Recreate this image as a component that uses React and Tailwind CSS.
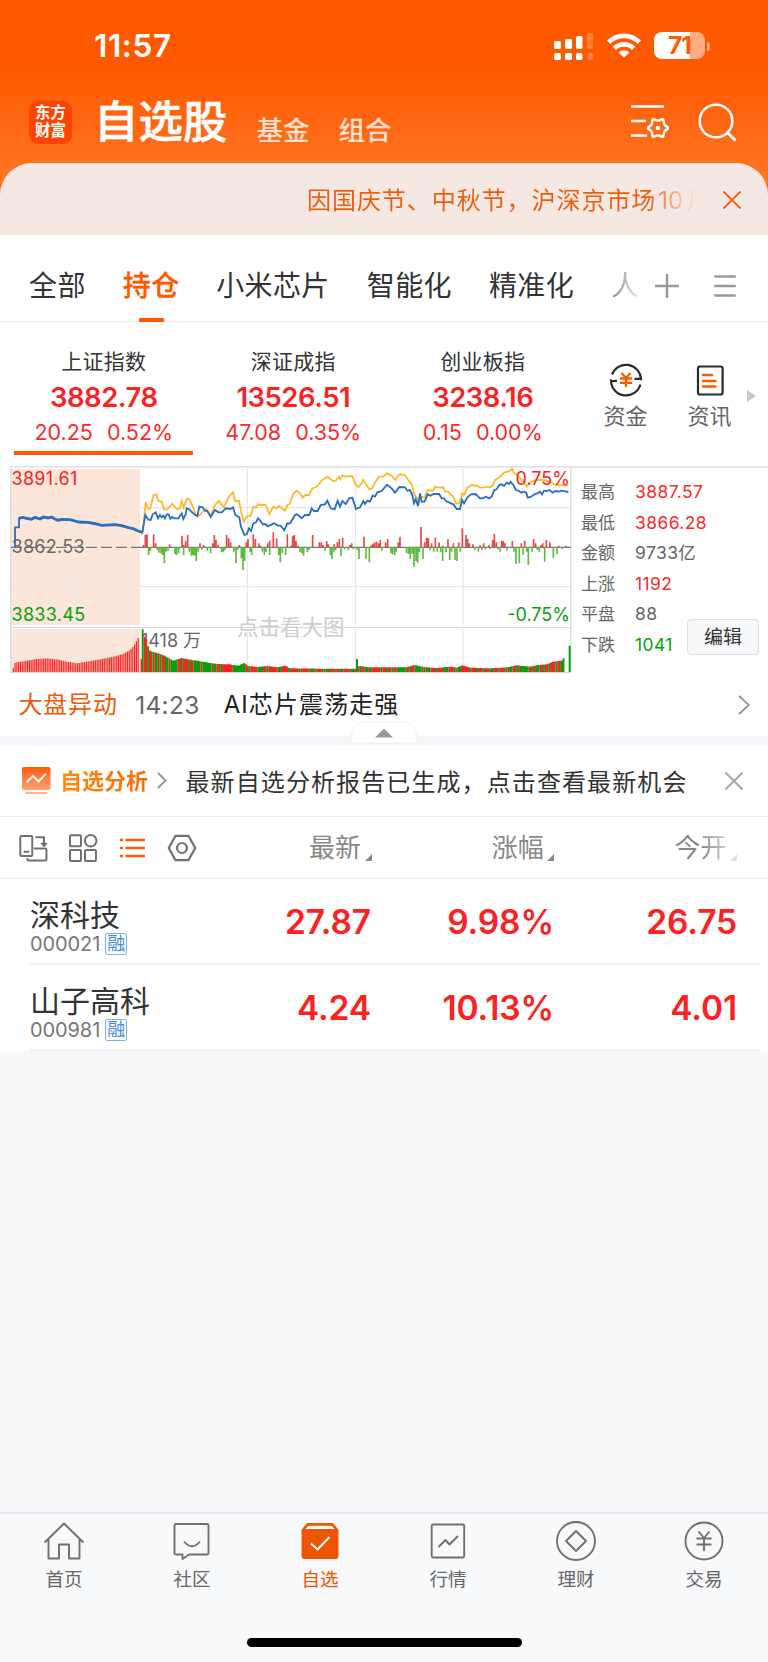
import React from 'react';

const INDEXES = [
  { name: '上证指数', value: '3882.78', change: '20.25', pct: '0.52%', active: true },
  { name: '深证成指', value: '13526.51', change: '47.08', pct: '0.35%' },
  { name: '创业板指', value: '3238.16', change: '0.15', pct: '0.00%' },
];

const STATS = [
  { label: '最高', value: '3887.57', color: 'text-[#f92b2b]' },
  { label: '最低', value: '3866.28', color: 'text-[#f92b2b]' },
  { label: '金额', value: '9733亿', color: 'text-[#666]' },
  { label: '上涨', value: '1192', color: 'text-[#f92b2b]' },
  { label: '平盘', value: '88', color: 'text-[#666]' },
  { label: '下跌', value: '1041', color: 'text-[#0a9f0a]' },
];

const STOCKS = [
  { name: '深科技', code: '000021', price: '27.87', pct: '9.98%', open: '26.75' },
  { name: '山子高科', code: '000981', price: '4.24', pct: '10.13%', open: '4.01' },
];

// Chart data. Each half of the session has its own x origin, 3 units per pixel.
const PRICE_AM = '45,277 45,217 57,217 57,190 67,187 80,190 95,193 105,187 120,192 130,186 145,189 155,186 165,192 175,196 185,193 210,194 235,201 265,202 290,207 305,211 345,209 365,212 385,218 400,221 415,228 427,232 436,180 441,188 445,194 452,195 458,178 467,172 474,190 480,180 485,187 490,182 495,190 500,178 506,178 511,191 517,186 522,190 535,190 545,175 550,192 557,178 560,160 567,163 583,178 592,184 598,155 608,157 615,167 622,168 632,186 645,165 655,172 665,172 678,160 692,162 699,157 706,180 713,184 718,187 723,215 733,240 740,238 747,220 753,228 760,205 768,202 774,190 782,198 788,208 797,207 803,214 815,208 823,205 833,212 842,212 853,226 862,205 870,206';
const PRICE_PM = '0,206 8,192 15,180 22,178 35,190 45,180 58,180 65,160 72,168 83,168 92,150 105,148 112,137 122,160 134,163 143,137 150,155 157,138 167,147 178,130 187,128 198,162 210,157 220,138 225,147 232,137 240,140 248,122 255,125 262,112 275,108 291,89 305,100 315,113 328,96 345,97 352,107 360,105 367,120 372,145 377,132 384,153 390,115 395,140 404,140 413,118 422,122 430,117 447,117 455,130 462,130 468,138 478,143 490,148 500,162 510,162 516,135 522,145 532,127 543,118 557,117 570,130 577,130 588,125 597,130 605,125 613,105 620,103 628,90 635,88 642,93 650,83 657,87 662,80 670,90 678,105 687,108 695,113 703,110 709,113 713,128 722,126 735,117 742,115 750,110 756,118 762,107 770,108 778,105 788,113 797,108 808,110 815,107 835,111';
const AVG_AM = '427,240 437,145 446,162 451,160 458,130 461,120 469,118 475,138 485,140 492,163 502,163 517,146 531,163 540,160 545,138 551,158 561,131 568,133 577,152 588,180 597,182 606,172 620,163 632,182 645,150 657,138 664,148 672,157 688,123 699,112 705,138 717,138 724,172 731,200 742,183 752,182 760,155 768,157 774,148 783,150 797,150 808,177 820,155 828,160 837,153 855,167 862,150 870,147';
const AVG_PM = '0,147 10,115 20,107 30,115 38,128 46,120 57,120 66,102 82,93 97,75 113,65 122,73 130,78 137,77 147,65 151,72 157,61 165,65 187,63 195,85 205,97 215,85 220,74 228,88 238,103 247,100 255,82 267,65 280,65 291,55 305,62 316,75 328,58 345,60 358,80 366,90 372,115 387,140 395,125 403,128 413,105 430,107 435,95 447,98 460,97 465,110 475,110 483,120 490,125 498,146 508,143 517,115 522,120 532,98 545,90 560,92 572,98 583,97 590,95 600,97 608,93 615,75 630,65 643,52 655,50 667,41 672,55 680,58 690,70 700,78 710,95 720,82 740,75 760,75 780,80 790,87 800,90 835,91';

const UP_AM = [[430,270],[436,240],[441,238],[461,238],[467,265],[509,268],[546,243],[551,270],[557,258],[563,240],[600,265],[611,270],[638,265],[643,240],[648,255],[654,270],[680,240],[686,250],[692,262],[718,270],[739,262],[744,252],[760,238],[766,252],[777,265],[782,272],[803,265],[809,257],[820,232],[830,250],[862,238]];
const DOWN_AM = [[446,300],[451,288],[456,280],[472,285],[477,293],[483,295],[488,300],[493,325],[498,290],[504,288],[525,298],[530,300],[536,295],[541,280],[551,300],[568,290],[574,302],[579,300],[584,302],[589,318],[595,290],[606,285],[622,288],[632,295],[665,292],[670,290],[675,285],[702,290],[708,325],[713,285],[724,310],[729,345],[734,318],[750,290],[755,300],[787,290],[793,300],[798,290],[809,300],[836,300],[841,322],[847,295],[857,300],[868,280]];
const UP_PM = [[3,272],[8,243],[13,240],[18,258],[24,272],[68,240],[88,262],[94,262],[99,270],[110,258],[115,268],[132,268],[142,262],[148,252],[158,248],[180,270],[185,265],[222,245],[244,270],[249,266],[254,262],[260,260],[266,265],[271,255],[287,262],[293,252],[325,262],[330,245],[393,216],[404,262],[410,248],[415,250],[425,265],[436,248],[447,262],[458,272],[474,253],[490,265],[506,262],[517,220],[528,240],[533,252],[538,265],[549,268],[570,270],[581,265],[597,270],[608,255],[613,237],[619,262],[635,257],[640,258],[645,265],[667,258],[694,265],[704,257],[731,252],[737,265],[753,270],[758,265],[769,255],[780,262],[806,272],[828,272]];
const DOWN_PM = [[30,292],[36,295],[41,302],[52,292],[57,285],[105,287],[121,300],[126,312],[132,290],[137,285],[153,303],[164,283],[174,285],[190,283],[201,285],[207,312],[228,312],[238,322],[276,288],[303,295],[308,298],[314,300],[319,290],[350,295],[356,296],[361,312],[367,296],[372,335],[378,318],[383,323],[388,292],[399,312],[420,285],[431,290],[442,290],[452,292],[458,318],[468,292],[479,315],[485,290],[495,315],[501,318],[511,290],[554,285],[565,290],[576,285],[586,283],[600,283],[624,283],[630,290],[651,287],[672,290],[678,327],[688,325],[699,300],[710,290],[715,330],[726,290],[742,285],[748,290],[764,320],[790,308],[801,298],[817,282]];

const AUCTION_VOL = [[40,638],[46,622],[52,622],[80,617],[110,612],[145,610],[175,614],[200,620],[230,625],[260,620],[300,613],[340,605],[370,597],[390,585],[402,572],[415,548]];
const VOL = [[428,523],[434,548],[439,552],[445,578],[450,588],[465,592],[480,597],[490,600],[520,617],[545,609],[575,615],[590,617],[620,622],[650,627],[690,628],[715,632],[733,624],[745,633],[770,636],[805,633],[830,637],[857,632],[870,640],[960,641],[1072,641],[1076,632],[1110,637],[1220,637],[1245,630],[1270,636],[1310,639],[1350,635],[1370,638],[1387,631],[1410,638],[1470,640],[1520,637],[1550,631],[1590,635],[1615,630],[1640,628],[1660,620],[1685,617],[1693,607]];
const VOL_COLORS = 'grrgrrgrgrgrrggrggggrrgrrrgrrggggrgggggrggrrgrrrrrrgggggggrrgrrrrgggrrgrrrrrggrrrrgrrrrrgrrrrrggrgrrrgrggrrrgrrggrrrrggrrrgrrggrgrrrrrgrrgrrgrrgggggrrgrrggggrgrggrrrgrrrgggrrrgrggrrrrrgrrrgrrgrrrggrrrgrrrgrggrrgrgggggrrgrggrrgrrgrrrgrrgggrggg';

function levelAt(points, x) {
  for (let i = 1; i < points.length; i++) {
    const [x0, y0] = points[i - 1];
    const [x1, y1] = points[i];
    if (x <= x1) return y0 + ((y1 - y0) * (x - x0)) / (x1 - x0);
  }
  return points[points.length - 1][1];
}

const bars = (list, base) => list.map(([x, y]) => `M${x} ${base}V${y.toFixed(1)}`).join('');

const range = (from, to, step) => {
  const out = [];
  for (let x = from; x <= to; x += step) out.push(x);
  return out;
};

const auctionBars = range(40, 417, 5.35).map((x) => [x, levelAt(AUCTION_VOL, x)]);
const volBars = range(428, 1694, 5.35).map((x) => [x, levelAt(VOL, x)]);
const redVol = volBars.filter((_, i) => VOL_COLORS[i % VOL_COLORS.length] === 'r');
const greenVol = volBars.filter((_, i) => VOL_COLORS[i % VOL_COLORS.length] === 'g');

export default function App() {
  return (
    <div lang="zh-CN" className="flex h-[1662px] w-[768px] flex-col overflow-hidden bg-[#f7f8fa] font-['Inter','Noto_Sans_CJK_SC',sans-serif] text-[#333]">
      <Header />
      <Tabs />
      <IndexBar />
      <MarketPanel />
      <Ticker />
      <AnalysisBanner />
      <TableHead />
      {STOCKS.map((s) => <StockRow key={s.code} stock={s} />)}
      <BottomNav />
    </div>
  );
}

function Header() {
  return (
    <div className="h-[235px] shrink-0 bg-linear-to-b from-[#ff5900] from-30% to-[#ff741f] to-75%">
      {/* Status bar */}
      <div className="flex h-[92px] items-center pl-[94px] pr-[58px] text-white">
        <span className="text-[31.5px] font-semibold leading-none tracking-[0.6px]">11:57</span>
        <svg className="ml-auto -mt-[1px]" width="40" height="28" viewBox="0 0 40 28" fill="#fff">
          <rect x="0" y="9" width="7" height="8" rx="1.6" />
          <rect x="11" y="7" width="7" height="10" rx="1.6" />
          <rect x="22" y="4" width="6.5" height="13" rx="1.6" />
          <rect x="33" y="1" width="6" height="16" rx="1.6" opacity=".22" />
          <rect x="0" y="21" width="7" height="7" rx="1.8" />
          <rect x="11" y="21" width="7" height="7" rx="1.8" />
          <rect x="22" y="21" width="6.5" height="7" rx="1.8" />
          <rect x="33" y="21" width="6" height="7" rx="1.8" opacity=".22" />
        </svg>
        <svg className="ml-[12px] -mt-[1px]" width="36" height="27" viewBox="0 0 36 27" fill="none" stroke="#fff" strokeWidth="4.6">
          <path d="M2.6 10.2a22 22 0 0 1 30.8 0" />
          <path d="M8.4 16.3a13.8 13.8 0 0 1 19.2 0" />
          <path d="M18 25.5l-5.4-5.1a7.8 7.8 0 0 1 10.8 0z" fill="#fff" stroke="none" />
        </svg>
        <div className="ml-[12px] -mt-[1px] flex h-[27px] w-[51px] items-center justify-center rounded-[8px] bg-linear-to-r from-white from-71% to-[#ffac82] to-71% text-[24.5px] font-bold leading-none tracking-[-1px] text-[#ff5900]">
          71
        </div>
        <div className="ml-[2px] h-[9px] w-[3px] rounded-r-full bg-[#ffac82]" />
      </div>

      {/* Title row */}
      <div className="flex h-[71px] items-center pl-[29px] pr-[31px]">
        <div className="mt-[-11px] flex h-[43px] w-[43px] flex-col items-center justify-center rounded-[9px] bg-[#ff4300] text-[15.5px] font-bold leading-[18px] text-white">
          <span>东方</span>
          <span>财富</span>
        </div>
        <span className="ml-[22px] mt-[-10px] text-[44.5px] font-medium leading-none text-white [-webkit-text-stroke:0.6px_white]">自选股</span>
        <span className="ml-[29px] mt-[5px] text-[26.5px] font-medium leading-none text-white/80">基金</span>
        <span className="ml-[29px] mt-[5px] text-[26.5px] font-medium leading-none text-white/80">组合</span>
        <svg className="ml-auto mt-[-11px]" width="40" height="36" viewBox="0 0 40 36" fill="none" stroke="#fff" strokeWidth="2.4">
          <path d="M1 2.5h33M1 17h15M1 31.5h16" />
          <path d="M36.560 25.630Q33.630 27.250 33.690 30.600Q33.750 33.960 30.880 32.230Q28 30.500 25.120 32.230Q22.250 33.960 22.310 30.600Q22.370 27.250 19.440 25.630Q16.500 24 19.440 22.370Q22.370 20.750 22.310 17.400Q22.250 14.040 25.120 15.770Q28 17.500 30.880 15.770Q33.750 14.040 33.690 17.400Q33.630 20.750 36.560 22.370Q39.500 24 36.560 25.630z" />
          <circle cx="28" cy="24" r="2.3" fill="#fff" stroke="none" />
        </svg>
        <svg className="ml-[28px] mt-[-11px]" width="39" height="39" viewBox="0 0 39 39" fill="none" stroke="#fff" strokeWidth="2.5">
          <circle cx="18" cy="18" r="16.3" />
          <path d="M29.3 29.5l8.2 8" strokeWidth="3" />
        </svg>
      </div>

      {/* Notice */}
      <div className="flex h-[72px] items-center rounded-t-[32px] bg-[#f5e8e2] pl-[307px] pr-[27px] pt-[1px]">
        <span className="w-[406px] whitespace-nowrap bg-linear-to-r from-[#ed5b0c] from-84% to-[#f5e8e2] to-96% bg-clip-text font-['Noto_Sans_CJK_SC',sans-serif] text-[24px] leading-[34px] tracking-[0.95px] text-transparent">
          因国庆节、中秋节，沪深京市场<span className="ml-[2px] mr-[3px] font-['Inter',sans-serif] tracking-normal">10</span>月
        </span>
        <svg className="ml-auto" width="18" height="18" viewBox="0 0 18 18" stroke="#ed5b0c" strokeWidth="1.9">
          <path d="M.5.5l17 17M17.5.5l-17 17" />
        </svg>
      </div>
    </div>
  );
}

function Tabs() {
  return (
    <div className="flex h-[87px] shrink-0 items-center border-b border-[#ebebeb] bg-white pl-[29px] pr-[32px] pb-[1px] pt-[16px] text-[28px] leading-[70px] tracking-[0.4px]">
      <span>全部</span>
      <span className="relative ml-[37px] font-medium text-[#ff5900] [-webkit-text-stroke:0.3px_#ff5900]">
        持仓
        <i className="absolute bottom-[-1px] left-[16px] h-[4px] w-[25px] rounded-[1px] bg-[#ff5900]" />
      </span>
      <span className="ml-[36.500px]">小米芯片</span>
      <span className="ml-[37px]">智能化</span>
      <span className="ml-[37px]">精准化</span>
      <span className="ml-[37px] bg-linear-to-r from-[#888] to-[#eee] bg-clip-text text-transparent">人</span>
      <svg className="ml-auto" width="24" height="24" viewBox="0 0 24 24" stroke="#999" strokeWidth="2.4">
        <path d="M12 0v24M0 12h24" />
      </svg>
      <svg className="ml-[35px]" width="22" height="24" viewBox="0 0 22 24" stroke="#999" strokeWidth="2.4" strokeLinecap="round">
        <path d="M1.2 2.5h19.6M1.2 12h19.6M1.2 21.5h19.6" />
      </svg>
    </div>
  );
}

function IndexBar() {
  return (
    <div className="flex h-[144px] shrink-0 bg-white pl-[9px]">
      {INDEXES.map((it) => (
        <div key={it.name} className="flex w-[189.5px] flex-col items-center pt-[26px]">
          <span className="text-[21px] leading-[28px] tracking-[0.2px]">{it.name}</span>
          <span className="mt-[4px] text-[27.5px] font-semibold leading-[34px] tracking-[-0.5px] text-[#f92323]">{it.value}</span>
          <span className="mt-[4px] flex gap-[14px] text-[21.5px] leading-[28px] text-[#f92b2b]">
            <span>{it.change}</span>
            <span>{it.pct}</span>
          </span>
          {it.active && <div className="mt-[5px] h-[4px] w-[179px] bg-[#ff5900]" />}
        </div>
      ))}
      <div className="ml-[8px] flex w-[80px] flex-col items-center pt-[41px] text-[22px] leading-[30px] text-[#666]">
        <svg width="34" height="34" viewBox="0 0 34 34" fill="none" stroke="#2b2b2b" strokeWidth="2.2">
          <path d="M3 11.5A15 15 0 0 1 32 15.8h-6.5M31.4 21.5A15 15 0 0 1 2 18.2l6-.4M32 15.8l-.3 1.5M2 18.2l-.2-1.8" />
          <path d="M12.5 10l4.5 5 4.5-5M10.8 15.5h12.4M10.8 19.8h12.4M17 15v9" stroke="#ff5900" strokeWidth="2.3" />
        </svg>
        <span className="mt-[4px]">资金</span>
      </div>
      <div className="ml-[4px] flex w-[80px] flex-col items-center pt-[41px] text-[22px] leading-[30px] text-[#666]">
        <svg width="34" height="34" viewBox="0 0 34 34" fill="none" stroke="#2b2b2b" strokeWidth="2.2">
          <rect x="5" y="3.5" width="24.6" height="28" rx="2" />
          <path d="M10 12h9M10 18h12.5M10 23.5h12.5" stroke="#ff5900" strokeWidth="2.4" strokeLinecap="round" />
        </svg>
        <span className="mt-[4px]">资讯</span>
      </div>
      <div className="mt-[68px] h-0 w-0 -ml-[3px] border-y-[6px] border-l-[9px] border-y-transparent border-l-[#c8c8c8]" />
    </div>
  );
}

function MarketPanel() {
  return (
    <div className="flex h-[208px] shrink-0 bg-white pl-[10px]">
      <MinuteChart />
      <div className="flex grow items-end border-t-2 border-[#e3e4ea] pb-[14px] pl-[9px]">
        <div className="w-[106px] shrink-0 text-[17px] leading-[30.5px]">
          {STATS.map((s) => (
            <div key={s.label} className="flex">
              <span className="w-[54px] shrink-0 text-[#666]">{s.label}</span>
              <span className={`whitespace-nowrap text-[17.5px] tracking-[0.4px] ${s.color}`}>{s.value}</span>
            </div>
          ))}
        </div>
        <button className="mb-[5px] h-[36px] w-[72px] shrink-0 rounded-[4px] border border-[#dcdfe6] bg-[#f7f8fa] text-[19px] leading-none text-[#333]">
          编辑
        </button>
      </div>
    </div>
  );
}

function MinuteChart() {
  return (
    <svg className="shrink-0" width="562" height="208" viewBox="0 0 562 208" fill="none">
      <rect x="1" y="3" width="129" height="156" fill="#fce6da" />
      <rect x="1" y="163" width="129" height="43" fill="#fce6da" />
      <path d="M1 41.7h560M1 120.7h560M65.5 3v156M65.5 163v43M237.5 3v156M237.5 163v43M345.5 3v156M345.5 163v43M453 3v156M453 163v43" stroke="#e6e7f0" strokeWidth="1.2" />
      <path d="M.7 207V.8H562M.7 161.5H561M.7 206.6H561M560.8 1v206" stroke="#d8dae2" strokeWidth="1.2" />
      <path d="M1 81.3h130" stroke="#777" strokeWidth="1.2" strokeDasharray="11 4" />
      <path d="M131 81.3h430" stroke="#777" strokeWidth="1.2" />
      <text x="227" y="169" fontSize="21.5" fill="#ccc">点击看大图</text>
      <text x="131" y="180.500" fontSize="18" fill="#666">1418 万</text>

      <g transform="translate(-10 -11) scale(.33333)">
        <path d={bars(UP_AM, 277)} stroke="#e8484a" strokeWidth="5" />
        <path d={bars(DOWN_AM, 277)} stroke="#5dbb3f" strokeWidth="5" />
        <path d={bars(auctionBars, 651)} stroke="#f92323" strokeWidth="3.6" />
        <path d="M424 651V612" stroke="#f92323" strokeWidth="5" />
        <path d={bars(redVol, 651)} stroke="#f92323" strokeWidth="5.6" />
        <path d={bars(greenVol, 651)} stroke="#0a9f0a" strokeWidth="5.6" />
        <path d="M1071 651V612M1709 651V572" stroke="#0a9f0a" strokeWidth="6" />
        <polyline points={AVG_AM} stroke="#fdbb30" strokeWidth="5.5" />
        <polyline points={PRICE_AM} stroke="#2b6fc2" strokeWidth="5.5" />
        <polyline points={PRICE_AM.split(' ').slice(3, 26).join(' ')} stroke="#2b6fc2" strokeWidth="8.5" strokeLinejoin="round" />
      </g>
      <g transform="translate(280 -11) scale(.33333)">
        <path d={bars(UP_PM, 277)} stroke="#e8484a" strokeWidth="5" />
        <path d={bars(DOWN_PM, 277)} stroke="#5dbb3f" strokeWidth="5" />
        <polyline points={AVG_PM} stroke="#fdbb30" strokeWidth="5.5" />
        <polyline points={PRICE_PM} stroke="#2b6fc2" strokeWidth="5.5" />
      </g>

      <g fontSize="18" letterSpacing=".3">
        <text x="1.5" y="18.5" fill="#f92323">3891.61</text>
        <text x="1.5" y="87" fill="#666">3862.53</text>
        <text x="1.5" y="154.5" fill="#0a9f0a">3833.45</text>
      </g>
      <g fontSize="18" textAnchor="end">
        <text x="560" y="18.5" fill="#f92323">0.75%</text>
        <text x="560" y="154.5" fill="#0a9f0a">-0.75%</text>
      </g>
    </svg>
  );
}

function Ticker() {
  return (
    <div className="relative flex h-[71px] shrink-0 items-center border-b-[9px] border-[#f5f6fa] bg-white pl-[18.500px] pr-[18px] text-[24px] leading-none">
      <span className="text-[#ed5b0c] tracking-[0.8px]">大盘异动</span>
      <span className="ml-[17.500px] text-[24.500px] tracking-[0.3px] text-[#666]">14:23</span>
      <span className="ml-[24px] text-[#222] tracking-[1.100px]">AI芯片震荡走强</span>
      <svg className="ml-auto" width="12" height="20" viewBox="0 0 12 20" fill="none" stroke="#888" strokeWidth="1.7">
        <path d="M1 .8L10.8 10 1 19.2" />
      </svg>
      {/* Collapse handle */}
      <svg className="absolute left-[349px] top-[47px]" width="70" height="24" viewBox="0 0 70 24">
        <path d="M1 22Q4 1 13 1h44q9 0 12 21z" fill="#fff" stroke="#ededf1" />
        <path d="M26 16.5l9-9 9 9z" fill="#999" />
      </svg>
    </div>
  );
}

function AnalysisBanner() {
  return (
    <div className="flex h-[72px] shrink-0 items-center border-b border-[#ebebeb] bg-white pl-[21px] pr-[25px] text-[24px] leading-none">
      <svg width="31" height="28" viewBox="0 0 31 28" fill="none">
        <defs>
          <linearGradient id="screen" x1="0" y1="0" x2="0" y2="1">
            <stop offset="0" stopColor="#ff5a0a" />
            <stop offset="1" stopColor="#ffa273" />
          </linearGradient>
        </defs>
        <rect x="1" y="0" width="28.5" height="23" rx="2" fill="url(#screen)" />
        <path d="M5.5 15.5l6.5-6.5 5.5 5.5 7.5-8" stroke="#fff" strokeWidth="2" />
        <path d="M4.5 26h21.5" stroke="#ffb48e" strokeWidth="2" />
      </svg>
      <span className="ml-[8px] bg-linear-to-r from-[#ff8a0c] to-[#ff6a00] bg-clip-text text-[22px] font-bold leading-[32px] text-transparent">自选分析</span>
      <svg className="ml-[9px]" width="10" height="17" viewBox="0 0 10 17" fill="none" stroke="#999" strokeWidth="2">
        <path d="M1 1l7.5 7.5L1 16" />
      </svg>
      <span className="ml-[18.500px] whitespace-nowrap font-['Noto_Sans_CJK_SC',sans-serif] tracking-[1.100px]">最新自选分析报告已生成，点击查看最新机会</span>
      <svg className="ml-auto" width="18" height="18" viewBox="0 0 18 18" stroke="#aaa" strokeWidth="2.2">
        <path d="M.5.5l17 17M17.5.5l-17 17" />
      </svg>
    </div>
  );
}

function TableHead() {
  return (
    <div className="flex h-[62px] shrink-0 items-center border-b border-[#ebebeb] bg-white pl-[19px] pr-[31px] text-[26px] leading-none text-[#888]">
      <svg width="29" height="28" viewBox="0 0 29 28" fill="none" stroke="#707070" strokeWidth="2">
        <rect x="1.3" y="2" width="12" height="20" rx="1" />
        <path d="M4.8 17.8h5.5M16.5 3.2H25v8M22.3 9l2.7 2.8L27.7 9" />
        <path d="M15 14.5h11.5q1 0 1 1v10q0 1-1 1H9.5q-1 0-1-1V24" />
      </svg>
      <svg className="ml-[20px]" width="30" height="28" viewBox="0 0 30 28" fill="none" stroke="#707070" strokeWidth="2">
        <rect x="2" y="1.3" width="11" height="11" rx="1" />
        <circle cx="22.7" cy="6.8" r="5.8" />
        <rect x="2" y="16" width="11" height="11" rx="1" />
        <rect x="17" y="16" width="11" height="11" rx="1" />
      </svg>
      <svg className="ml-[21px]" width="27" height="20" viewBox="0 0 27 20" stroke="#ff5900" strokeWidth="2.4">
        <path d="M6.5 2H26M6.5 10H26M6.5 18H26M1 2h3M1 10h3M1 18h3" />
      </svg>
      <svg className="ml-[21px]" width="30" height="28" viewBox="0 0 30 28" fill="none" stroke="#707070" strokeWidth="2.2" strokeLinejoin="round">
        <path d="M8.5 1.8h13L28.3 14l-6.8 12.2h-13L1.7 14z" />
        <circle cx="15" cy="14" r="5" />
      </svg>
      <div className="flex w-[175px] items-end justify-end">
        最新<SortMark />
      </div>
      <div className="flex w-[183px] items-end justify-end">
        涨幅<SortMark />
      </div>
      <div className="flex w-[183px] items-end justify-end">
        <span className="bg-linear-to-r from-[#888] from-50% to-[#ccc] bg-clip-text text-transparent">今开</span>
        <SortMark faded />
      </div>
    </div>
  );
}

function SortMark({ faded }) {
  return (
    <svg className="ml-[3.500px]" width="7" height="7" viewBox="0 0 7 7">
      <path d="M7 0v7H0z" fill={faded ? '#e0e0e4' : '#888'} />
    </svg>
  );
}

function StockRow({ stock }) {
  return (
    <div className="h-[86px] shrink-0 bg-white pl-[30px] pr-[9px]">
      <div className="flex h-[86px] items-center border-b-2 border-[#f1f2f4] pt-[2px] pr-[22px] text-[33.500px] font-semibold tracking-[-0.1px] text-[#f92323]">
        <div className="w-[160px] pt-[8px] font-normal text-[#333]">
          <div className="text-[30px] leading-[36px] tracking-normal">{stock.name}</div>
          <div className="flex items-center text-[20px] leading-[22px] text-[#777]">
            <span className="tracking-[-0.1px]">{stock.code}</span>
            <span className="ml-[5px] flex h-[22px] w-[22px] items-center justify-center rounded-[2px] border border-[#7fb0ea] text-[18px] leading-none tracking-normal text-[#3f8be0]">融</span>
          </div>
        </div>
        <span className="w-[181px] text-right">{stock.price}</span>
        <span className="w-[183px] text-right">{stock.pct}</span>
        <span className="w-[183px] text-right">{stock.open}</span>
      </div>
    </div>
  );
}

const NAV = [
  {
    label: '首页',
    icon: <path d="M1.5 21.5L21 2.5l19.500 19M5.500 18v19.500h10.500V23.500h10V37.500h10.500V18" />,
  },
  {
    label: '社区',
    icon: (
      <>
        <path d="M5 3h31q1.500 0 1.500 1.500v27.500q0 1.500-1.500 1.500H18l-6.500 4.500v-4.500H5q-1.500 0-1.500-1.500V4.500Q3.500 3 5 3z" />
        <path d="M13 20.500q8 9.500 16 0" />
      </>
    ),
  },
  {
    label: '自选',
    active: true,
    icon: (
      <>
        <path d="M3.500 9l5-6h25l5 6v26q0 2-2 2h-31q-2 0-2-2z" fill="#ee5500" stroke="#ee5500" />
        <path d="M6.500 8l2.800-3.300h23.400L35.500 8z" fill="#fff" stroke="none" />
        <path d="M12 22.500l6.500 6L30.500 16" stroke="#fff" />
      </>
    ),
  },
  {
    label: '行情',
    icon: (
      <>
        <rect x="4.700" y="3.500" width="32.500" height="33" rx="1.500" />
        <path d="M11.500 26l7-7 4 4.500 8.500-8.500" />
      </>
    ),
  },
  {
    label: '理财',
    icon: (
      <>
        <circle cx="21" cy="20" r="19" />
        <path d="M21 10l10 10-10 10-10-10z" />
      </>
    ),
  },
  {
    label: '交易',
    icon: (
      <>
        <circle cx="21" cy="20" r="18.500" />
        <path d="M15.500 10.500L21 17l5.500-6.500M13.500 17.500h15M13.500 23.500h15M21 17v13" />
      </>
    ),
  },
];

function BottomNav() {
  return (
    <div className="mt-auto h-[150px] shrink-0 border-t-2 border-[#ebecef] bg-[#f8f9fb]">
      <div className="grid grid-cols-6 pt-[7px]">
        {NAV.map((n) => (
          <div key={n.label} className={`flex flex-col items-center text-[18.5px] leading-[26px] ${n.active ? 'text-[#ee5500]' : 'text-[#666]'}`}>
            <svg width="42" height="40" viewBox="0 0 42 40" fill="none" stroke="#707070" strokeWidth="1.9" strokeLinejoin="round">
              {n.icon}
            </svg>
            <span className="mt-[5px]">{n.label}</span>
          </div>
        ))}
      </div>
      <div className="mx-auto mt-[46px] h-[9px] w-[275px] rounded-full bg-black" />
    </div>
  );
}
